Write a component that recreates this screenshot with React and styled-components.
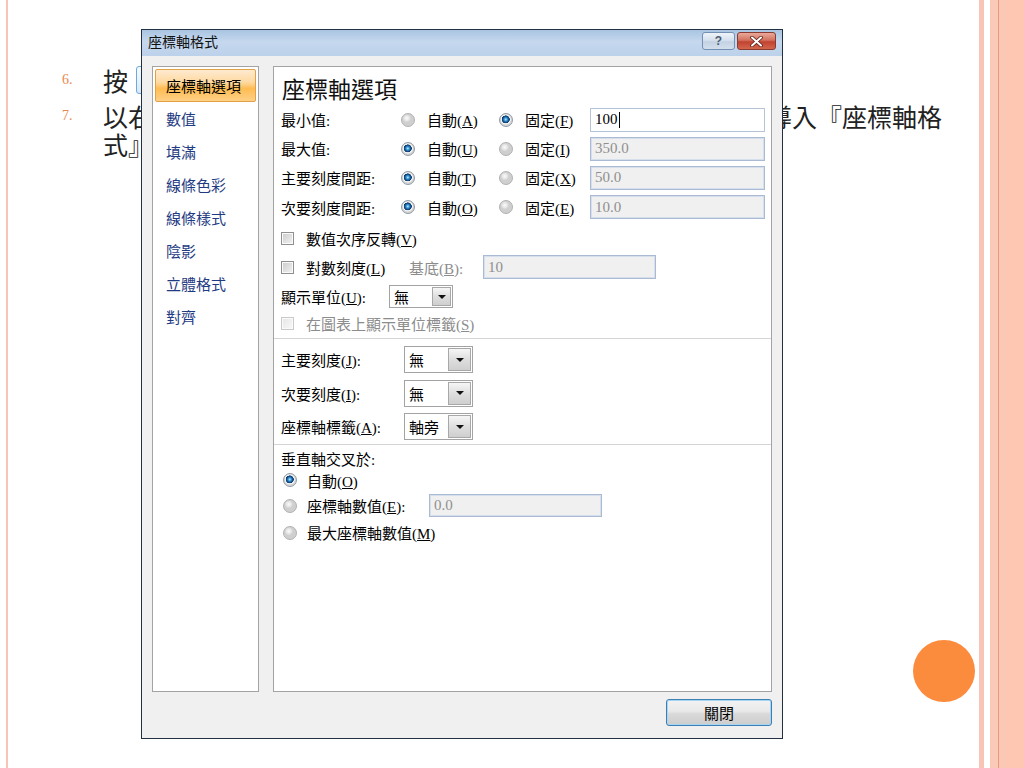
import React from 'react';
import styled, { createGlobalStyle } from 'styled-components';

const CJK = `"Noto Sans CJK TC", "Noto Sans CJK SC", sans-serif`;
const UI = `"Liberation Serif", "Noto Sans CJK TC", serif`;

const GlobalStyle = createGlobalStyle`
    html, body {
        margin: 0;
        padding: 0;
        background: #fff;
    }
`;

const Slide = styled.div`
    position: relative;
    display: flex;
    width: 1024px;
    height: 768px;
    overflow: hidden;
    background: #fff;
`;

const LeftRule = styled.div`
    flex: none;
    width: 2px;
    margin-left: 6px;
    background: #f6c5b6;
`;

const Content = styled.div`
    flex: 1;
    display: flex;
    flex-direction: column;
`;

const List = styled.ol`
    list-style: none;
    margin: 0;
    padding: 66px 0 0 54px;
    font-family: ${CJK};
    font-size: 25px;
    line-height: 28px;
    color: #222;
`;

const Item = styled.li`
    display: flex;
    margin-bottom: 8px;
    white-space: nowrap;
`;

const Num = styled.span`
    flex: none;
    width: 41px;
    font-family: 'Liberation Serif', serif;
    font-size: 14px;
    color: #e8884e;
`;

const KeyPic = styled.span`
    display: inline-block;
    width: 40px;
    height: 28px;
    margin-left: 8px;
    vertical-align: top;
    box-sizing: border-box;
    border: 1px solid #6fa8dc;
    border-radius: 3px;
    background: linear-gradient(#f6fbff, #d8e9f8);
`;

const CircleRow = styled.div`
    margin-top: auto;
    display: flex;
    justify-content: flex-end;
    padding: 0 4px 66px 0;
`;

const Dot = styled.div`
    width: 62px;
    height: 62px;
    border-radius: 50%;
    background: #fb8b3d;
`;

const RightDecor = styled.div`
    flex: none;
    display: flex;
    width: 45px;
`;

const Stripe = styled.div`
    width: ${({ $w }) => $w}px;
    background: ${({ $c }) => $c};
`;

/* dialog window */

const Dialog = styled.div`
    position: absolute;
    left: 141px;
    top: 29px;
    width: 642px;
    height: 710px;
    box-sizing: border-box;
    display: flex;
    flex-direction: column;
    border: 1px solid #22303f;
    background: #f0f0f0;
    font-family: ${UI};
    font-size: 15px;
    color: #000;
`;

const TitleBar = styled.div`
    flex: none;
    height: 24px;
    display: flex;
    align-items: flex-start;
    justify-content: space-between;
    padding: 2px 6px 0;
    background: linear-gradient(#a9c4e2, #c5d8ee 45%, #bcd1ea);
`;

const Title = styled.span`
    font-family: ${CJK};
    font-size: 14px;
    line-height: 18px;
    color: #111;
`;

const Caps = styled.div`
    display: flex;
    gap: 2px;
`;

const CapButton = styled.div`
    height: 18px;
    width: ${({ $close }) => ($close ? 39 : 33)}px;
    box-sizing: border-box;
    display: flex;
    align-items: center;
    justify-content: center;
    border: 1px solid ${({ $close }) => ($close ? '#8a3a2e' : '#7390b3')};
    border-radius: 3px;
    background: ${({ $close }) =>
        $close
            ? 'linear-gradient(#e9a99b, #d2725f 45%, #c24330 55%, #d3664d)'
            : 'linear-gradient(#eef3f9, #d6e1ee 45%, #c3d2e4 55%, #d3dfec)'};
    font-family: 'Liberation Sans', sans-serif;
    font-size: 12px;
    font-weight: bold;
    color: #4d5d70;
`;

const Body = styled.div`
    flex: 1;
    display: flex;
    flex-direction: column;
    padding: 10px 10px 12px;
`;

const Panels = styled.div`
    flex: 1;
    display: flex;
    gap: 14px;
`;

const NavPanel = styled.div`
    flex: none;
    width: 107px;
    box-sizing: border-box;
    border: 1px solid #a3a3a3;
    background: #fff;
    padding: 2px;
`;

const NavItem = styled.div`
    height: 33px;
    box-sizing: border-box;
    display: flex;
    align-items: center;
    padding-left: 10px;
    font-family: ${CJK};
    font-size: 15px;
    color: ${({ $sel }) => ($sel ? '#000' : '#1f3b83')};
    border: 1px solid ${({ $sel }) => ($sel ? '#e2a047' : 'transparent')};
    border-radius: 2px;
    background: ${({ $sel }) =>
        $sel ? 'linear-gradient(#feead0, #ffd9a0 40%, #ffbc52 60%, #ffd086)' : 'none'};
`;

const MainPanel = styled.div`
    flex: 1;
    display: flex;
    flex-direction: column;
    border: 1px solid #a3a3a3;
    background: #fff;
`;

const Heading = styled.div`
    height: 34px;
    padding: 4px 0 0 8px;
    display: flex;
    align-items: center;
    font-family: ${CJK};
    font-size: 23px;
    color: #111;
`;

const FieldRow = styled.div`
    height: ${({ $h }) => $h}px;
    display: grid;
    grid-template-columns: 120px 98px 91px 175px;
    align-items: center;
    padding-left: 7px;
`;

const Line = styled.div`
    height: ${({ $h }) => $h}px;
    display: flex;
    align-items: center;
    padding-left: ${({ $pl }) => $pl ?? 7}px;
    color: ${({ $dim }) => ($dim ? '#8c8c8c' : '#000')};
`;

const Opt = styled.span`
    display: flex;
    align-items: center;
    gap: ${({ $gap }) => $gap ?? 12}px;
    white-space: nowrap;
`;

const Label = styled.span`
    flex: none;
    width: ${({ $w }) => ($w ? `${$w}px` : 'auto')};
    white-space: nowrap;
    color: ${({ $dim }) => ($dim ? '#8c8c8c' : 'inherit')};
`;

const Radio = styled.span`
    flex: none;
    width: 14px;
    height: 14px;
    box-sizing: border-box;
    border-radius: 50%;
    border: 1px solid ${({ $on }) => ($on ? '#8f9aa6' : '#b0b0b0')};
    background: ${({ $on }) =>
        $on
            ? 'radial-gradient(circle closest-side at 48% 45%, #c2eeff 0%, #45a3e0 25%, #125693 52%, #0e3a66 70%, #e6e6e6 76%, #fafafa 86%, #d4d4d4 100%)'
            : 'radial-gradient(circle closest-side at 40% 35%, #fbfbfb 0%, #e6e6e6 60%, #cfcfcf 100%)'};
`;

const Check = styled.span`
    flex: none;
    width: 13px;
    height: 13px;
    box-sizing: border-box;
    border: 1px solid ${({ $dim }) => ($dim ? '#c9c9c9' : '#8f8f8f')};
    box-shadow: inset 0 0 0 1px #fafafa;
    background: ${({ $dim }) =>
        $dim ? 'linear-gradient(135deg, #e6e6e6, #f8f8f8)' : 'linear-gradient(135deg, #cbcbcb, #f3f3f3)'};
    margin-right: 12px;
`;

const TextBox = styled.div`
    width: ${({ $w }) => $w}px;
    height: ${({ $h }) => $h ?? 24}px;
    box-sizing: border-box;
    display: flex;
    align-items: center;
    padding-left: 4px;
    border: 1px solid ${({ $off }) => ($off ? '#a9bad2' : '#b7c4d6')};
    box-shadow: ${({ $off }) => ($off ? 'inset 0 0 0 1px #d6e0ec' : 'none')};
    background: ${({ $off }) => ($off ? '#f0f0f0' : '#fff')};
    color: ${({ $off }) => ($off ? '#8f8f8f' : '#000')};
    font-size: 15px;
`;

const Caret = styled.span`
    display: inline-block;
    width: 1px;
    height: 16px;
    margin-left: 1px;
    background: #000;
`;

const Combo = styled.div`
    flex: none;
    width: ${({ $w }) => $w}px;
    height: ${({ $h }) => $h}px;
    box-sizing: border-box;
    display: flex;
    border: 1px solid #a3a3a3;
    background: #fff;
`;

const ComboText = styled.span`
    flex: 1;
    display: flex;
    align-items: center;
    padding-left: 4px;
    font-family: ${CJK};
    font-size: 15px;
`;

const ComboArrow = styled.span`
    flex: none;
    width: ${({ $w }) => $w}px;
    margin: 1px;
    box-sizing: border-box;
    display: flex;
    align-items: center;
    justify-content: center;
    border: 1px solid #a8a8a8;
    background: linear-gradient(#f6f6f6, #dedede 50%, #cfcfcf);

    &::after {
        content: '';
        border-left: 4px solid transparent;
        border-right: 4px solid transparent;
        border-top: 4px solid #111;
    }
`;

const Separator = styled.div`
    margin: ${({ $m }) => $m};
    border-top: 1px solid #d4d4d4;
`;

const Footer = styled.div`
    display: flex;
    justify-content: flex-end;
    padding-top: 7px;
`;

const CloseButton = styled.div`
    width: 106px;
    height: 27px;
    box-sizing: border-box;
    display: flex;
    align-items: center;
    justify-content: center;
    border: 1px solid #3d7fb2;
    border-radius: 3px;
    box-shadow: inset 0 0 0 1px #a7d6f2;
    background: linear-gradient(#f3f3f3, #e9e9e9 45%, #d9d9d9 55%, #cdcdcd);
    font-family: ${CJK};
    font-size: 15px;
`;

const CloseGlyph = () => (
    <svg width="13" height="11" viewBox="0 0 13 11">
        <path d="M2 1.5 L11 9.5 M11 1.5 L2 9.5" stroke="#5a1d14" strokeWidth="3.6" strokeLinecap="round" />
        <path d="M2 1.5 L11 9.5 M11 1.5 L2 9.5" stroke="#fff" strokeWidth="2" strokeLinecap="round" />
    </svg>
);

const Key = ({ children }) => (
    <>
        (<u>{children}</u>)
    </>
);

const navItems = ['座標軸選項', '數值', '填滿', '線條色彩', '線條樣式', '陰影', '立體格式', '對齊'];

const bounds = [
    { label: '最小值:', auto: 'A', fixed: 'F', autoOn: false, value: '100', h: 29 },
    { label: '最大值:', auto: 'U', fixed: 'I', autoOn: true, value: '350.0', h: 29 },
    { label: '主要刻度間距:', auto: 'T', fixed: 'X', autoOn: true, value: '50.0', h: 29 },
    { label: '次要刻度間距:', auto: 'O', fixed: 'E', autoOn: true, value: '10.0', h: 30 },
];

const ticks = [
    { label: '主要刻度', key: 'J', value: '無', h: 33 },
    { label: '次要刻度', key: 'I', value: '無', h: 34 },
    { label: '座標軸標籤', key: 'A', value: '軸旁', h: 33 },
];

const stripes = [
    [5, '#f8c4b3'],
    [6, '#ffffff'],
    [8, '#fbc9b7'],
    [1, '#e59b7c'],
    [8, '#fbc8b5'],
    [17, '#fdc7b1'],
];

const App = () => (
    <Slide>
        <GlobalStyle />
        <LeftRule />
        <Content>
            <List>
                <Item>
                    <Num>6.</Num>
                    <span>
                        按<KeyPic />
                    </span>
                </Item>
                <Item>
                    <Num>7.</Num>
                    <span>
                        以右鍵點選圖表中的垂直座標軸，在快顯功能表中選擇後並2導入『座標軸格
                        <br />
                        式』
                    </span>
                </Item>
            </List>
            <CircleRow>
                <Dot />
            </CircleRow>
        </Content>
        <RightDecor>
            {stripes.map(([w, c], i) => (
                <Stripe key={i} $w={w} $c={c} />
            ))}
        </RightDecor>

        <Dialog>
            <TitleBar>
                <Title>座標軸格式</Title>
                <Caps>
                    <CapButton>?</CapButton>
                    <CapButton $close>
                        <CloseGlyph />
                    </CapButton>
                </Caps>
            </TitleBar>
            <Body>
                <Panels>
                    <NavPanel>
                        {navItems.map((item, i) => (
                            <NavItem key={item} $sel={i === 0}>
                                {item}
                            </NavItem>
                        ))}
                    </NavPanel>
                    <MainPanel>
                        <Heading>座標軸選項</Heading>
                        {bounds.map((row) => (
                            <FieldRow key={row.label} $h={row.h}>
                                <Label>{row.label}</Label>
                                <Opt>
                                    <Radio $on={row.autoOn} />
                                    <span>
                                        自動<Key>{row.auto}</Key>
                                    </span>
                                </Opt>
                                <Opt>
                                    <Radio $on={!row.autoOn} />
                                    <span>
                                        固定<Key>{row.fixed}</Key>
                                    </span>
                                </Opt>
                                <TextBox $w={175} $off={row.autoOn}>
                                    {row.value}
                                    {!row.autoOn && <Caret />}
                                </TextBox>
                            </FieldRow>
                        ))}
                        <Line $h={32}>
                            <Check />
                            <span>
                                數值次序反轉<Key>V</Key>
                            </span>
                        </Line>
                        <Line $h={26}>
                            <Check />
                            <Label $w={103}>
                                對數刻度<Key>L</Key>
                            </Label>
                            <Label $w={74} $dim>
                                基底<Key>B</Key>:
                            </Label>
                            <TextBox $w={173} $off>
                                10
                            </TextBox>
                        </Line>
                        <Line $h={33}>
                            <Label $w={108}>
                                顯示單位<Key>U</Key>:
                            </Label>
                            <Combo $w={64} $h={23}>
                                <ComboText>無</ComboText>
                                <ComboArrow $w={19} />
                            </Combo>
                        </Line>
                        <Line $h={20} $dim>
                            <Check $dim />
                            <span>
                                在圖表上顯示單位標籤<Key>S</Key>
                            </span>
                        </Line>
                        <Separator $m="5px 0 4px" />
                        {ticks.map((row) => (
                            <Line key={row.label} $h={row.h}>
                                <Label $w={123}>
                                    {row.label}
                                    <Key>{row.key}</Key>:
                                </Label>
                                <Combo $w={69} $h={27}>
                                    <ComboText>{row.value}</ComboText>
                                    <ComboArrow $w={23} />
                                </Combo>
                            </Line>
                        ))}
                        <Separator $m="1px 0 3px" />
                        <Line $h={20}>垂直軸交叉於:</Line>
                        <Line $h={24} $pl={9}>
                            <Opt $gap={10}>
                                <Radio $on />
                                <span>
                                    自動<Key>O</Key>
                                </span>
                            </Opt>
                        </Line>
                        <Line $h={27} $pl={9}>
                            <Opt $gap={10}>
                                <Radio />
                                <Label $w={122}>
                                    座標軸數值<Key>E</Key>:
                                </Label>
                            </Opt>
                            <TextBox $w={173} $h={23} $off>
                                0.0
                            </TextBox>
                        </Line>
                        <Line $h={27} $pl={9}>
                            <Opt $gap={10}>
                                <Radio />
                                <span>
                                    最大座標軸數值<Key>M</Key>
                                </span>
                            </Opt>
                        </Line>
                    </MainPanel>
                </Panels>
                <Footer>
                    <CloseButton>關閉</CloseButton>
                </Footer>
            </Body>
        </Dialog>
    </Slide>
);

export default App;
